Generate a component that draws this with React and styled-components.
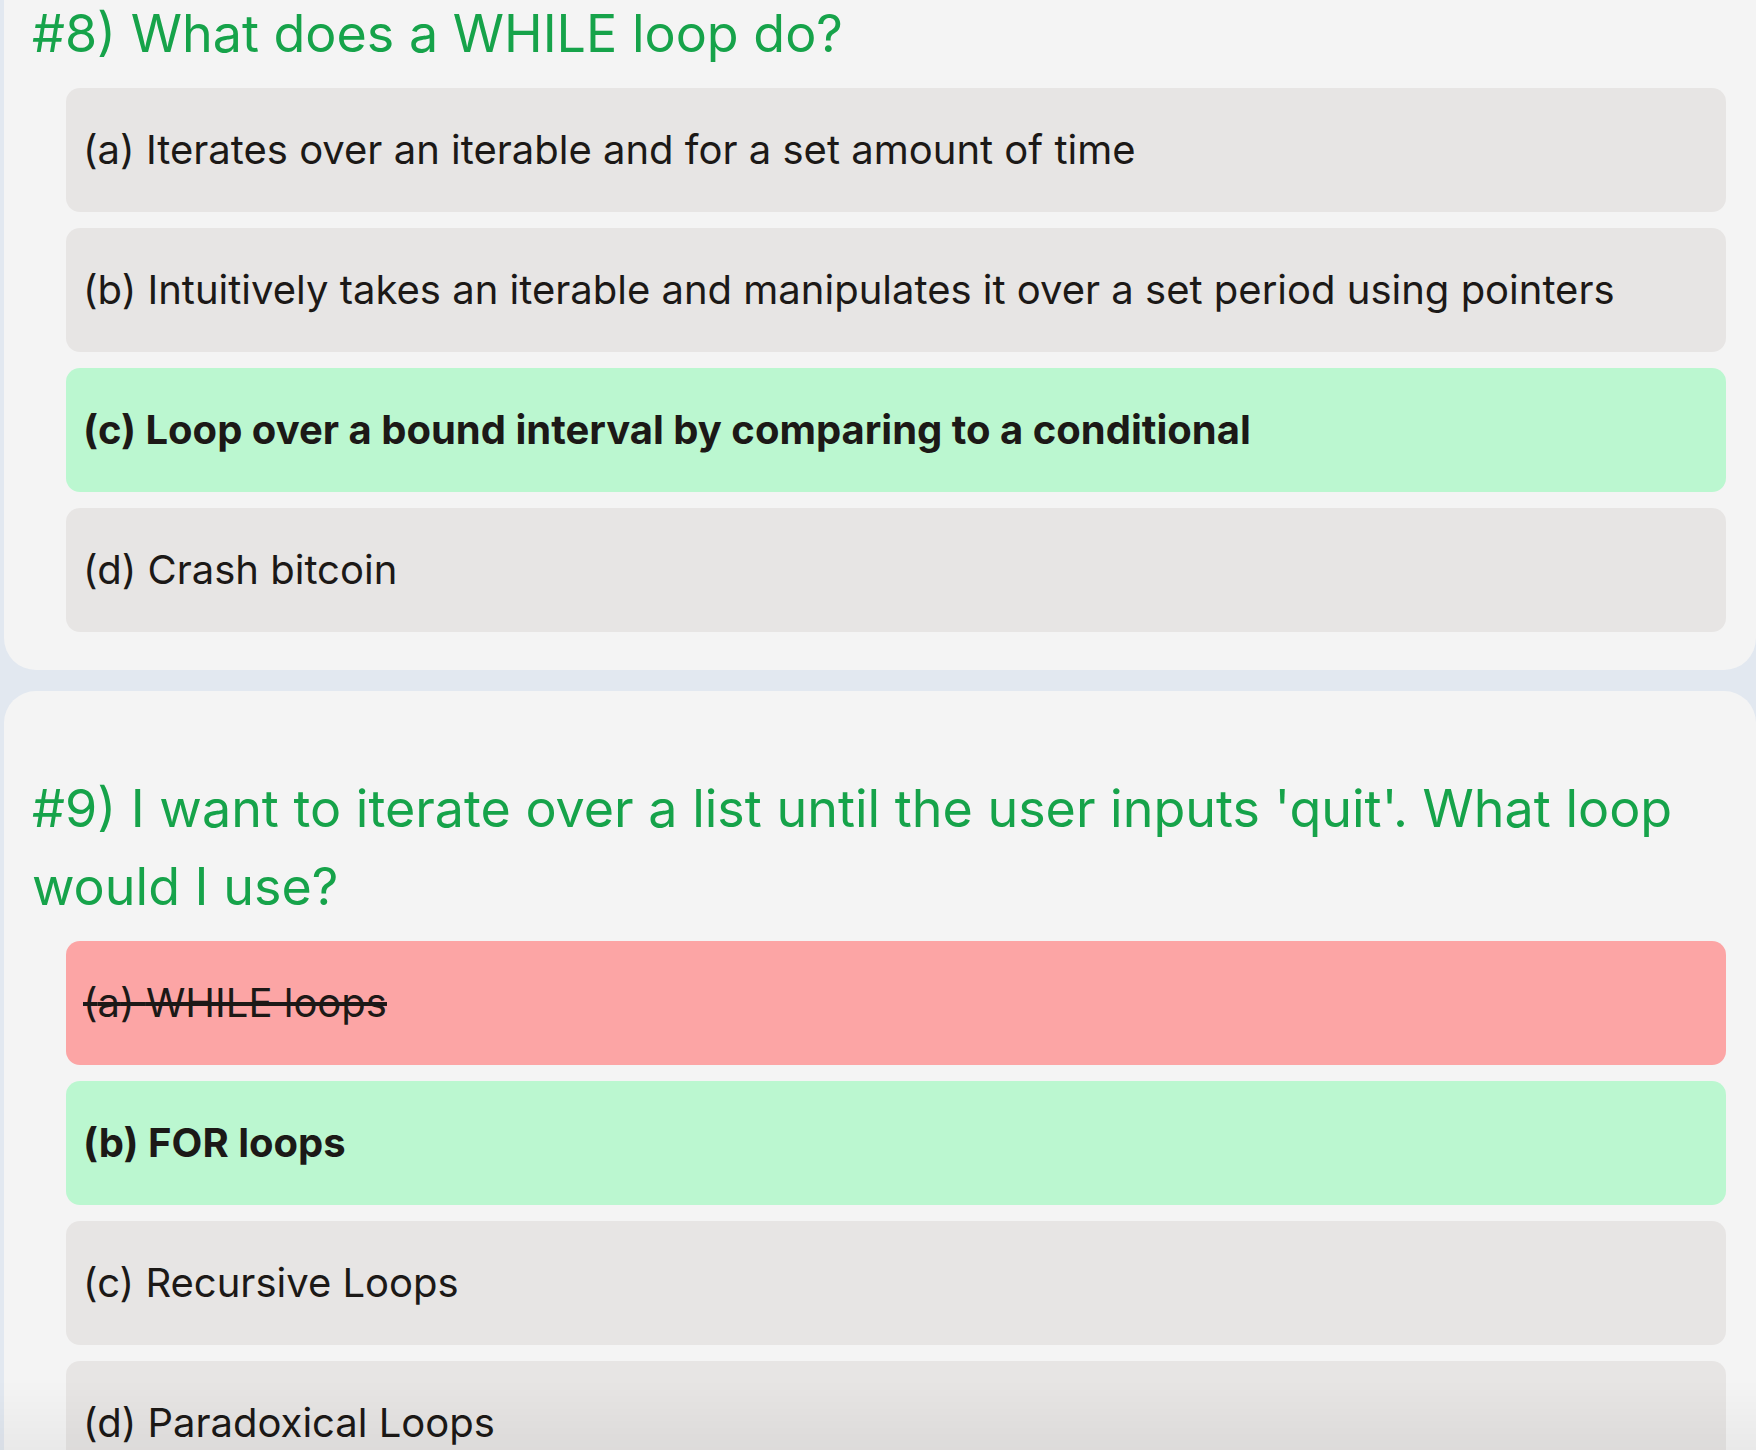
import React from "react";
import styled, { createGlobalStyle } from "styled-components";

const Global = createGlobalStyle`
  html, body { margin: 0; padding: 0; }
  body {
    background: #e2e8f0;
    font-family: Inter, "Noto Sans", "Liberation Sans", sans-serif;
    overflow: hidden;
  }
`;

const Page = styled.main`
  display: flex;
  flex-direction: column;
  gap: 21px;
  padding-left: 4px;
  margin-top: -84px;
`;

const Card = styled.section`
  background: #f4f4f4;
  border-radius: 32px;
  padding: 79px 30px 38px 28px;
  display: flex;
  flex-direction: column;
  gap: 15px;
`;

const Title = styled.h2`
  margin: 0;
  color: #16a34a;
  font-size: 52px;
  font-weight: 400;
  line-height: 78px;
`;

const Options = styled.ul`
  list-style: none;
  margin: 0 0 0 34px;
  padding: 0;
  display: flex;
  flex-direction: column;
  gap: 16px;
`;

const bgFor = (s) =>
  s === "correct" ? "#bbf7d0" : s === "wrong" ? "#fca5a5" : "#e7e5e4";

const Option = styled.li`
  background: ${(p) => bgFor(p.$state)};
  border-radius: 14px;
  padding: 32px 17px;
  font-size: 40px;
  line-height: 60px;
  color: #1c1917;
  font-weight: ${(p) => (p.$state === "correct" ? 700 : 400)};
  text-decoration: ${(p) => (p.$state === "wrong" ? "line-through" : "none")};
`;

const Fade = styled.div`
  position: fixed;
  left: 0;
  right: 0;
  bottom: 0;
  height: 70px;
  pointer-events: none;
  background: linear-gradient(to bottom, rgba(0,0,0,0), rgba(0,0,0,0.045));
`;

const questions = [
  {
    n: 8,
    q: "What does a WHILE loop do?",
    opts: [
      ["a", "Iterates over an iterable and for a set amount of time"],
      ["b", "Intuitively takes an iterable and manipulates it over a set period using pointers"],
      ["c", "Loop over a bound interval by comparing to a conditional", "correct"],
      ["d", "Crash bitcoin"],
    ],
  },
  {
    n: 9,
    q: "I want to iterate over a list until the user inputs 'quit'. What loop would I use?",
    opts: [
      ["a", "WHILE loops", "wrong"],
      ["b", "FOR loops", "correct"],
      ["c", "Recursive Loops"],
      ["d", "Paradoxical Loops"],
    ],
  },
];

export default function App() {
  return (
    <>
      <Global />
      <Page>
        {questions.map((q) => (
          <Card key={q.n}>
            <Title>#{q.n}) {q.q}</Title>
            <Options>
              {q.opts.map(([l, t, s]) => (
                <Option key={l} $state={s}>
                  ({l}) {t}
                </Option>
              ))}
            </Options>
          </Card>
        ))}
      </Page>
      <Fade />
    </>
  );
}
